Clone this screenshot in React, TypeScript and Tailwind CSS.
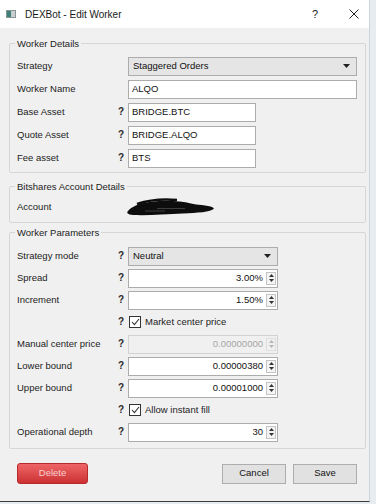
import type { ReactNode } from "react";

const fieldBorder = "border border-[#acacac]";

function Help() {
  return (
    <span className="w-[10px] shrink-0 text-[10px] font-bold leading-none text-[#2b2b2b]">
      ?
    </span>
  );
}

function Row({
  label,
  help,
  children,
}: {
  label?: string;
  help?: boolean;
  children: ReactNode;
}) {
  return (
    <div className="flex h-[19px] items-center">
      <span className="w-[101px] shrink-0 text-[#1c1c1c]">{label}</span>
      {help ? <Help /> : <span className="w-[10px] shrink-0" />}
      {children}
    </div>
  );
}

function TextInput({ value, width }: { value: string; width: string }) {
  return (
    <div
      className={`flex h-[19px] items-center bg-white pl-[3px] text-[#111] ${fieldBorder} ${width}`}
    >
      {value}
    </div>
  );
}

function Combo({ value, width }: { value: string; width: string }) {
  return (
    <div
      className={`flex h-[19px] items-center justify-between bg-[#e5e5e5] pl-[4px] pr-[6px] text-[#111] ${fieldBorder} ${width}`}
    >
      <span>{value}</span>
      <svg width="7" height="4" viewBox="0 0 7 4">
        <path d="M0 0H7L3.5 4Z" fill="#222" />
      </svg>
    </div>
  );
}

function Spin({ value, disabled }: { value: string; disabled?: boolean }) {
  const arrow = disabled ? "#b5b5b5" : "#333";
  return (
    <div
      className={`flex h-[19px] w-[150px] items-center justify-end pr-[1px] ${
        disabled
          ? "border border-[#d2d2d2] bg-[#f0f0f0] text-[#a5a5a5]"
          : "border border-[#acacac] bg-white text-[#111]"
      }`}
    >
      <span>{value}</span>
      <div
        className={`ml-[3px] flex h-[13px] w-[10px] flex-col items-center justify-center gap-[2px] border ${
          disabled ? "border-[#dedede]" : "border-[#c4c4c4] bg-[#f4f4f4]"
        }`}
      >
        <svg width="5" height="3" viewBox="0 0 5 3">
          <path d="M0 3H5L2.5 0Z" fill={arrow} />
        </svg>
        <svg width="5" height="3" viewBox="0 0 5 3">
          <path d="M0 0H5L2.5 3Z" fill={arrow} />
        </svg>
      </div>
    </div>
  );
}

function Check({ label }: { label: string }) {
  return (
    <div className="flex items-center gap-[4px] pl-[1px]">
      <span className="flex h-[12px] w-[12px] items-center justify-center border border-[#333] bg-white">
        <svg width="9" height="8" viewBox="0 0 9 8">
          <path d="M1 4L3.4 6.6L8 1" fill="none" stroke="#333" strokeWidth="1.1" />
        </svg>
      </span>
      <span className="text-[#1c1c1c]">{label}</span>
    </div>
  );
}

function Group({
  title,
  className,
  children,
}: {
  title: string;
  className: string;
  children: ReactNode;
}) {
  return (
    <fieldset
      className={`ml-[9px] w-[357px] rounded-[2px] border border-[#d6d6d6] px-[7px] ${className}`}
    >
      <legend className="-ml-[2px] px-[2px] leading-[13px] text-[#1c1c1c]">{title}</legend>
      {children}
    </fieldset>
  );
}

export default function App() {
  return (
    <div className="h-[504px] w-[376px] overflow-hidden bg-[#e6ecef] font-['Liberation_Sans',Arial,sans-serif] text-[9.5px]">
      <div className="flex h-[502px] w-[370px] flex-col border-r border-b border-r-[#cdd5da] border-b-[#3c3c3c] bg-[#f0f0f0]">
        <div className="flex h-[28px] shrink-0 items-center bg-white pl-[6px] pr-[10px]">
          <svg width="10" height="8" viewBox="0 0 10 8">
            <rect x="0.5" y="0.5" width="9" height="7" fill="#c8cfcf" stroke="#8a9696" />
            <rect x="1" y="1" width="4" height="6" fill="#3f7f7a" />
          </svg>
          <span className="ml-[9px] text-[10px] text-[#1a1a1a]">DEXBot - Edit Worker</span>
          <span className="ml-auto mr-[31px] text-[11px] text-[#222]">?</span>
          <svg width="10" height="10" viewBox="0 0 10 10">
            <path d="M0.5 0.5L9.5 9.5M9.5 0.5L0.5 9.5" stroke="#222" strokeWidth="1" />
          </svg>
        </div>

        <Group title="Worker Details" className="mt-[8.5px] pt-[7px] pb-[4.5px]">
          <div className="flex flex-col gap-[4px]">
            <Row label="Strategy">
              <Combo value="Staggered Orders" width="w-[229px]" />
            </Row>
            <Row label="Worker Name">
              <TextInput value="ALQO" width="w-[229px]" />
            </Row>
            <Row label="Base Asset" help>
              <TextInput value="BRIDGE.BTC" width="w-[128px]" />
            </Row>
            <Row label="Quote Asset" help>
              <TextInput value="BRIDGE.ALQO" width="w-[128px]" />
            </Row>
            <Row label="Fee asset" help>
              <TextInput value="BTS" width="w-[128px]" />
            </Row>
          </div>
        </Group>

        <Group title="Bitshares Account Details" className="mt-[6.5px] pt-[5px] pb-[5px]">
          <Row label="Account">
            <svg width="88" height="19" viewBox="0 0 88 19" className="-ml-[1px]">
              <defs>
                <filter id="smudge">
                  <feGaussianBlur stdDeviation="0.7" />
                </filter>
              </defs>
              <g filter="url(#smudge)">
                <path
                  d="M1 13C4 9 12 5 26 3.5C40 2 54 3 64 5.5C74 7.5 84 7 87 10.5C84 14 70 15 56 15.5C40 16.5 20 17.5 6 17C1 16.5 -1 15 1 13Z"
                  fill="#111"
                />
                <path d="M10 6C22 2 36 0.8 50 2" stroke="#111" strokeWidth="2.4" fill="none" />
                <path d="M2 15C8 11 14 10 22 10" stroke="#111" strokeWidth="3" fill="none" />
                <path d="M30 10.5H58M18 13H38" stroke="#4a4a4a" strokeWidth="0.8" fill="none" />
              </g>
            </svg>
          </Row>
        </Group>

        <Group title="Worker Parameters" className="mt-[3px] pt-[8px] pb-[6.5px]">
          <div className="flex flex-col gap-[3px]">
            <Row label="Strategy mode" help>
              <Combo value="Neutral" width="w-[150px]" />
            </Row>
            <Row label="Spread" help>
              <Spin value="3.00%" />
            </Row>
            <Row label="Increment" help>
              <Spin value="1.50%" />
            </Row>
            <Row help>
              <Check label="Market center price" />
            </Row>
            <Row label="Manual center price" help>
              <Spin value="0.00000000" disabled />
            </Row>
            <Row label="Lower bound" help>
              <Spin value="0.00000380" />
            </Row>
            <Row label="Upper bound" help>
              <Spin value="0.00001000" />
            </Row>
            <Row help>
              <Check label="Allow instant fill" />
            </Row>
            <Row label="Operational depth" help>
              <Spin value="30" />
            </Row>
          </div>
        </Group>

        <div className="mt-[14px] flex items-center pl-[17px] pr-[12px]">
          <button
            type="button"
            className="h-[21px] w-[71px] rounded-[3px] border border-[#b8292c] bg-gradient-to-b from-[#ee6466] to-[#cc3033] text-[#f7cfcf]"
          >
            Delete
          </button>
          <button
            type="button"
            className="ml-auto h-[20px] w-[64px] border border-[#adadad] bg-[#e1e1e1] text-[#111]"
          >
            Cancel
          </button>
          <button
            type="button"
            className="ml-[7px] h-[20px] w-[64px] border border-[#adadad] bg-[#e1e1e1] text-[#111]"
          >
            Save
          </button>
        </div>
      </div>
    </div>
  );
}
